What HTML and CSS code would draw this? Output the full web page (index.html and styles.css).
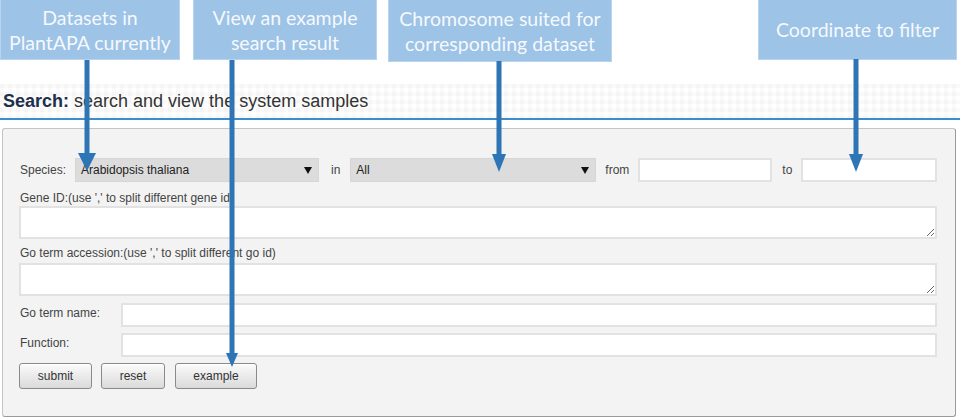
FILE: index.html
```html
<!DOCTYPE html>
<html>
<head>
<meta charset="utf-8">
<title>PlantAPA search</title>
<link rel="stylesheet" href="styles.css">
</head>
<body>
<main class="page">
  <div class="head">
    <h2 class="title"><b>Search:</b> search and view the system samples</h2>
  </div>
  <form class="panel">
    <div class="row row-top">
      <span class="lbl lbl-species">Species:</span>
      <div class="select sel-species"><span>Arabidopsis thaliana</span><i class="caret"></i></div>
      <span class="lbl lbl-in">in</span>
      <div class="select sel-chr"><span>All</span><i class="caret"></i></div>
      <span class="lbl lbl-from">from</span>
      <input class="inp inp-from" type="text">
      <span class="lbl lbl-to">to</span>
      <input class="inp inp-to" type="text">
    </div>
    <label class="blk-lbl lbl-gene">Gene ID:(use ',' to split different gene id)</label>
    <textarea class="area"></textarea>
    <label class="blk-lbl lbl-go">Go term accession:(use ',' to split different go id)</label>
    <textarea class="area"></textarea>
    <div class="row row-name">
      <span class="lbl lbl-wide">Go term name:</span>
      <input class="inp inp-wide" type="text">
    </div>
    <div class="row row-func">
      <span class="lbl lbl-wide">Function:</span>
      <input class="inp inp-wide" type="text">
    </div>
    <div class="buttons">
      <button type="button" class="btn btn-submit">submit</button>
      <button type="button" class="btn btn-reset">reset</button>
      <button type="button" class="btn btn-example">example</button>
    </div>
  </form>
</main>

<div class="annotations">
  <div class="callout c1">Datasets in<br>PlantAPA currently</div>
  <div class="callout c2">View an example<br>search result</div>
  <div class="callout c3">Chromosome suited for<br>corresponding dataset</div>
  <div class="callout c4">Coordinate to filter</div>
  <svg class="arrows" width="960" height="420" viewBox="0 0 960 420">
    <g fill="#2e75b6">
      <rect x="84.5" y="60" width="5" height="96"/>
      <polygon points="78,153 96,153 87,171"/>
      <rect x="229.5" y="60" width="5" height="296"/>
      <polygon points="226,353 238,353 232,367"/>
      <rect x="496.5" y="61" width="5" height="96"/>
      <polygon points="492,154 506,154 499,172"/>
      <rect x="853.5" y="59" width="5" height="98"/>
      <polygon points="849,154 863,154 856,172"/>
    </g>
  </svg>
</div>
</body>
</html>
```

FILE: styles.css
```css
* { box-sizing: border-box; }

html, body {
  margin: 0;
  padding: 0;
  background: #ffffff;
}

body {
  width: 960px;
  height: 420px;
  overflow: hidden;
  position: relative;
  font-family: "Liberation Sans", Arial, sans-serif;
  color: #444;
}

.page {
  padding-top: 84px;
}

.head {
  padding: 5px 0 5px 3px;
  border-bottom: 2px solid #3d8ccc;
  background-color: #ffffff;
  background-image:
    linear-gradient(90deg, rgba(0,0,0,0.018) 50%, transparent 50%),
    linear-gradient(rgba(0,0,0,0.018) 50%, transparent 50%);
  background-size: 8px 8px, 8px 8px;
}

.title {
  margin: 0;
  font-size: 18px;
  line-height: 24px;
  font-weight: normal;
  color: #333;
}

.title b {
  color: #1d2f4a;
  font-weight: bold;
}

.panel {
  margin: 8px 4px 0 2px;
  height: 289px;
  background: #f3f3f3;
  border: 1px solid #c4c4c4;
  border-right-color: #9a9a9a;
  border-bottom-color: #9a9a9a;
  border-radius: 3px;
  padding: 29px 18px 0 16px;
  display: flex;
  flex-direction: column;
  align-items: flex-start;
}

.row {
  display: flex;
  align-items: center;
  height: 24px;
}

.lbl {
  font-size: 12px;
  line-height: 14px;
  color: #444;
  white-space: nowrap;
}

.lbl-species { width: 56px; padding-left: 1px; }
.lbl-in { margin: 0 10px 0 12px; }
.lbl-from { margin: 0 9px 0 9px; }
.lbl-to { margin: 0 9px 0 10px; }

.select {
  height: 24px;
  background: #dcdcdc;
  border: 1px solid #d6d6d6;
  display: flex;
  align-items: center;
  justify-content: space-between;
  padding: 0 6px 0 5px;
  font-size: 12px;
  color: #222;
}

.sel-species { width: 244px; }
.sel-chr { width: 246px; }

.caret {
  width: 0;
  height: 0;
  border-left: 4px solid transparent;
  border-right: 4px solid transparent;
  border-top: 7px solid #111;
}

.inp {
  height: 24px;
  background: #fff;
  border: 2px solid #e2e2e2;
  outline: none;
  margin: 0;
  padding: 0 4px;
  font-family: inherit;
  font-size: 12px;
}

.inp-from { width: 134px; }
.inp-to { width: 136px; }

.blk-lbl {
  display: block;
  font-size: 12px;
  line-height: 14px;
  color: #444;
  padding-left: 1px;
}

.lbl-gene { margin-top: 9px; margin-bottom: 1px; }
.lbl-go { margin-top: 7px; margin-bottom: 3px; }

.area {
  display: block;
  width: 918px;
  height: 33px;
  margin: 0;
  background: #fff;
  border: 2px solid #e2e2e2;
  outline: none;
  padding: 2px 4px;
  font-family: inherit;
  font-size: 12px;
  resize: both;
}

.row-name { margin-top: 7px; align-items: flex-start; }
.row-func { margin-top: 6px; align-items: flex-start; }

.lbl-wide {
  width: 102px;
  padding-left: 1px;
  padding-top: 3px;
}

.inp-wide { width: 816px; }

.buttons {
  display: flex;
  margin-top: 6px;
}

.btn {
  height: 26px;
  margin: 0;
  padding: 0;
  font-family: inherit;
  font-size: 12px;
  color: #333;
  border: 1px solid #8a8a8a;
  border-radius: 3px;
  background: linear-gradient(#fbfbfb, #dadada);
  box-shadow: inset 0 1px 0 #ffffff;
}

.btn-submit { width: 73px; }
.btn-reset { width: 64px; margin-left: 9px; }
.btn-example { width: 82px; margin-left: 10px; }

/* annotation overlay */
.annotations {
  position: absolute;
  left: 0;
  top: 0;
  width: 960px;
  height: 420px;
  pointer-events: none;
}

.callout {
  position: absolute;
  top: 0;
  height: 60px;
  display: flex;
  align-items: center;
  justify-content: center;
  text-align: center;
  background: #9dc3e6;
  border: 1px solid #b9d4ee;
  border-top: none;
  color: #f5f9fd;
  font-family: Lato, "Open Sans", sans-serif;
  font-size: 19.5px;
  line-height: 25px;
}

.c1 { left: 0; width: 180px; }
.c2 { left: 193px; width: 184px; }
.c3 { left: 388px; width: 224px; height: 62px; }
.c4 { left: 758px; width: 199px; }

.arrows {
  position: absolute;
  left: 0;
  top: 0;
}
```
